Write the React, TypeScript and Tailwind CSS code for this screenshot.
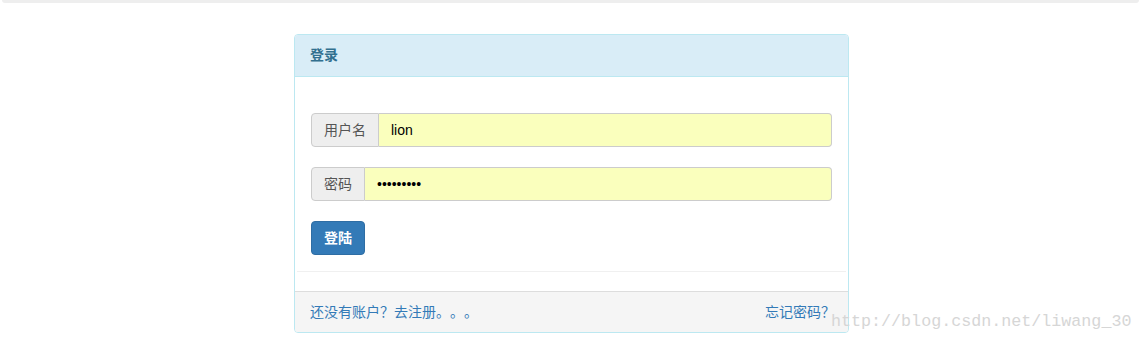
import React from 'react';

const cjk = { fontFamily: '"Liberation Sans", "Noto Sans CJK SC", sans-serif' };

function InputGroup({ label, type, value }: { label: string; type: string; value: string }) {
  return (
    <div className="flex h-[34px] w-full">
      <span className="flex items-center rounded-l-[4px] border border-[#ccc] bg-[#eee] px-3 text-[14px] text-[#555]">
        {label}
      </span>
      <input
        type={type}
        defaultValue={value}
        readOnly
        className="min-w-0 flex-1 rounded-r-[4px] border border-l-0 border-[#ccc] bg-[#faffbd] px-3 text-[14px] text-black outline-none"
        style={cjk}
      />
    </div>
  );
}

export default function App() {
  return (
    <div className="relative h-[339px] w-[1141px] overflow-hidden bg-white [text-spacing-trim:space-all]" style={cjk}>
      {/* top bar */}
      <div className="mx-[2px] h-[3px] rounded-b-[3px] bg-[#eee]" />

      <div className="ml-[294px] mt-[31px] w-[555px] rounded-[4px] border border-[#bce8f1] bg-white">
        <div className="flex h-[42px] items-center rounded-t-[3px] border-b border-[#bce8f1] bg-[#d9edf7] px-[15px] text-[14px] font-bold text-[#31708f]">
          登录
        </div>

        <div className="px-4 pt-[36px]">
          <div className="flex flex-col gap-5">
            <InputGroup label="用户名" type="text" value="lion" />
            <InputGroup label="密码" type="password" value="123456789" />
          </div>
          <button className="mt-5 h-[34px] rounded-[4px] border border-[#2e6da4] bg-[#337ab7] px-3 text-[14px] font-bold text-white">
            登陆
          </button>
        </div>

        <div className="mx-[2px] mt-4 h-px bg-[#f0f0f0]" />

        <div className="mt-[19px] flex h-[41px] items-center justify-between rounded-b-[3px] border-t border-[#ddd] bg-[#f5f5f5] pl-[15px] pr-[13px] text-[14px] text-[#337ab7] [text-spacing-trim:space-all]">
          <a href="#">还没有账户？去注册。。。</a>
          <a href="#">忘记密码？</a>
        </div>
      </div>

      {/* watermark */}
      <div
        className="absolute left-[831px] top-[309px] text-[16.7px] text-[#d6d6d6]"
        style={{ fontFamily: '"Liberation Mono", monospace' }}
      >
        http://blog.csdn.net/liwang_30
      </div>
    </div>
  );
}
